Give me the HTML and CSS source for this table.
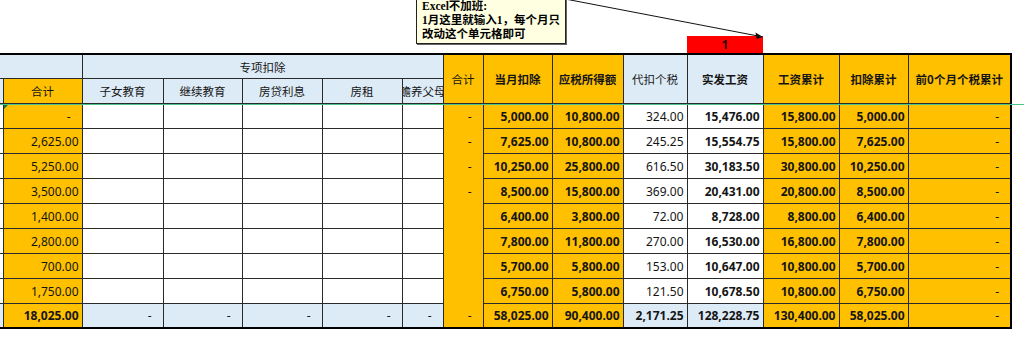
FILE: index.html
```html
<!DOCTYPE html>
<html lang="zh">
<head>
<meta charset="utf-8">
<title>个税累计表</title>
<link rel="stylesheet" href="styles.css">
</head>
<body>
<div class="sheet">
  <svg class="arrow" width="1024" height="60" viewBox="0 0 1024 60">
    <line x1="560" y1="-2" x2="757" y2="35.8" stroke="#111" stroke-width="1"/>
    <polygon points="763,37 756.7,38.9 755.5,32.6" fill="#111"/>
  </svg>
  <div class="note">Excel不加班:<br>1月这里就输入1，每个月只<br>改动这个单元格即可</div>
  <div class="freeze"></div>
  <table class="grid">
    <colgroup>
      <col style="width:3px"><col style="width:79px"><col style="width:81px"><col style="width:79px"><col style="width:80px"><col style="width:80px"><col style="width:41px"><col style="width:40px"><col style="width:69px"><col style="width:71px"><col style="width:64px"><col style="width:76px"><col style="width:76px"><col style="width:69px"><col style="width:103px">
    </colgroup>
    <tr class="flag">
      <td></td><td></td><td></td><td></td><td></td><td></td><td></td><td></td><td></td><td></td><td></td><td class="red">1</td><td></td><td></td><td></td>
    </tr>
    <tr class="h1">
      <td class="b c0" colspan="2"></td>
      <td class="b hd" colspan="5">专项扣除</td>
      <td class="o hd c7" rowspan="2">合计</td>
      <td class="o hd bold" rowspan="2">当月扣除</td>
      <td class="o hd bold" rowspan="2">应税所得额</td>
      <td class="b hd" rowspan="2">代扣个税</td>
      <td class="b hd bold" rowspan="2">实发工资</td>
      <td class="o hd bold" rowspan="2">工资累计</td>
      <td class="o hd bold" rowspan="2">扣除累计</td>
      <td class="o hd bold last" rowspan="2">前0个月个税累计</td>
    </tr>
    <tr class="h2">
      <td class="b c0"></td>
      <td class="o hd">合计</td>
      <td class="b hd">子女教育</td>
      <td class="b hd">继续教育</td>
      <td class="b hd">房贷利息</td>
      <td class="b hd gl">房租</td>
      <td class="b hd gl clip"><div class="clipbox">赡养父母</div></td>
    </tr>
    <tr class="row">
      <td class="c0"></td><td class="o dash mark"><span class="tri"></span>-</td><td></td><td></td><td></td><td class="gl"></td><td class="gl"></td>
      <td class="o c7 dash">-</td><td class="o bold">5,000.00</td><td class="o bold">10,800.00</td><td>324.00</td><td class="bold">15,476.00</td><td class="o bold">15,800.00</td><td class="o bold">5,000.00</td><td class="o dash last">-</td>
    </tr>
    <tr class="row">
      <td class="c0"></td><td class="o">2,625.00</td><td></td><td></td><td></td><td class="gl"></td><td class="gl"></td>
      <td class="o c7 dash">-</td><td class="o bold">7,625.00</td><td class="o bold">10,800.00</td><td>245.25</td><td class="bold">15,554.75</td><td class="o bold">15,800.00</td><td class="o bold">7,625.00</td><td class="o dash last">-</td>
    </tr>
    <tr class="row">
      <td class="c0"></td><td class="o">5,250.00</td><td></td><td></td><td></td><td class="gl"></td><td class="gl"></td>
      <td class="o c7 dash">-</td><td class="o bold">10,250.00</td><td class="o bold">25,800.00</td><td>616.50</td><td class="bold">30,183.50</td><td class="o bold">30,800.00</td><td class="o bold">10,250.00</td><td class="o dash last">-</td>
    </tr>
    <tr class="row">
      <td class="c0"></td><td class="o">3,500.00</td><td></td><td></td><td></td><td class="gl"></td><td class="gl"></td>
      <td class="o c7 dash">-</td><td class="o bold">8,500.00</td><td class="o bold">15,800.00</td><td>369.00</td><td class="bold">20,431.00</td><td class="o bold">20,800.00</td><td class="o bold">8,500.00</td><td class="o dash last">-</td>
    </tr>
    <tr class="row">
      <td class="c0"></td><td class="o">1,400.00</td><td></td><td></td><td></td><td class="gl"></td><td class="gl"></td>
      <td class="o c7"></td><td class="o bold">6,400.00</td><td class="o bold">3,800.00</td><td>72.00</td><td class="bold">8,728.00</td><td class="o bold">8,800.00</td><td class="o bold">6,400.00</td><td class="o dash last">-</td>
    </tr>
    <tr class="row">
      <td class="c0"></td><td class="o">2,800.00</td><td></td><td></td><td></td><td class="gl"></td><td class="gl"></td>
      <td class="o c7"></td><td class="o bold">7,800.00</td><td class="o bold">11,800.00</td><td>270.00</td><td class="bold">16,530.00</td><td class="o bold">16,800.00</td><td class="o bold">7,800.00</td><td class="o dash last">-</td>
    </tr>
    <tr class="row">
      <td class="c0"></td><td class="o">700.00</td><td></td><td></td><td></td><td class="gl"></td><td class="gl"></td>
      <td class="o c7"></td><td class="o bold">5,700.00</td><td class="o bold">5,800.00</td><td>153.00</td><td class="bold">10,647.00</td><td class="o bold">10,800.00</td><td class="o bold">5,700.00</td><td class="o dash last">-</td>
    </tr>
    <tr class="row">
      <td class="c0"></td><td class="o">1,750.00</td><td></td><td></td><td></td><td class="gl"></td><td class="gl"></td>
      <td class="o c7"></td><td class="o bold">6,750.00</td><td class="o bold">5,800.00</td><td>121.50</td><td class="bold">10,678.50</td><td class="o bold">10,800.00</td><td class="o bold">6,750.00</td><td class="o dash last">-</td>
    </tr>
    <tr class="total">
      <td class="b c0"></td><td class="o bold">18,025.00</td><td class="b dash">-</td><td class="b dash">-</td><td class="b dash">-</td><td class="b dash gl">-</td><td class="b dash gl">-</td>
      <td class="o c7 dash">-</td><td class="o bold">58,025.00</td><td class="o bold">90,400.00</td><td class="b bold">2,171.25</td><td class="b bold">128,228.75</td><td class="o bold">130,400.00</td><td class="o bold">58,025.00</td><td class="o dash last">-</td>
    </tr>
  </table>
</div>
</body>
</html>
```
FILE: styles.css
```css
html, body {
  margin: 0;
  padding: 0;
  background: #fff;
}

.sheet {
  position: relative;
  width: 1024px;
  height: 348px;
  padding-top: 36px;
  box-sizing: border-box;
  overflow: hidden;
}

.arrow {
  position: absolute;
  left: 0;
  top: 0;
  z-index: 2;
  pointer-events: none;
}

.note {
  position: absolute;
  left: 416px;
  top: -2px;
  width: 150px;
  box-sizing: border-box;
  padding: 0 4px 2px 5px;
  background: #ffffe1;
  border: 1px solid #222;
  box-shadow: 1px 1px 0 #666;
  font-family: "Liberation Serif", "Noto Sans CJK SC", serif;
  font-weight: bold;
  font-size: 11.5px;
  line-height: 14px;
  color: #000;
  z-index: 3;
}

.freeze {
  position: absolute;
  left: 0;
  top: 104px;
  width: 1024px;
  height: 1px;
  background: #4cc38a;
  z-index: 2;
}

.grid {
  border-collapse: collapse;
  table-layout: fixed;
  width: 1011px;
  font-family: "Noto Sans", "Noto Sans CJK SC", sans-serif;
  font-size: 12px;
  color: #151515;
}

.grid td {
  border: 1px solid #2a2a2a;
  padding: 0 3px 0 0;
  white-space: nowrap;
  overflow: hidden;
  text-align: right;
  vertical-align: middle;
  background: #fff;
}

.grid tr.flag td {
  border: none;
  height: 17px;
  background: transparent;
}

.grid tr.flag td.red {
  background: #ff0000;
  text-align: center;
  font-weight: bold;
  font-size: 12px;
  padding: 0;
  color: #2a0000;
}

.grid tr.h1 td {
  border-top: 2px solid #000;
  height: 23px;
}

.grid tr.h2 td {
  height: 24px;
}

.grid tr.row td {
  height: 24px;
}

.grid tr.total td {
  height: 23px;
  border-bottom: 2px solid #000;
}

.grid td.hd {
  text-align: center;
  padding: 0;
  font-family: "Noto Sans CJK SC", sans-serif;
  font-size: 11.5px;
}

.grid td.o {
  background: #ffc000;
}

.grid td.b {
  background: #ddebf7;
}

.grid td.bold {
  font-weight: bold;
}

.grid td.dash {
  padding-right: 11px;
}

.grid td.c0 {
  padding: 0;
  border-left: none;
}

.grid td.gl {
  border-left: 1px solid #8c8c8c;
}

.grid tr.row td.c7 {
  border-top: none;
  border-bottom: none;
}

.grid tr.total td.c7 {
  border-top: none;
}

.grid td.last {
  border-right: 2px solid #000;
}

.grid td.clip {
  padding: 0;
}

.clipbox {
  display: flex;
  justify-content: center;
  overflow: hidden;
  width: 100%;
}

.grid td.mark {
  position: relative;
}

.tri {
  position: absolute;
  left: 0;
  top: 0;
  width: 0;
  height: 0;
  border-top: 5px solid #1e7145;
  border-right: 5px solid transparent;
}
```
